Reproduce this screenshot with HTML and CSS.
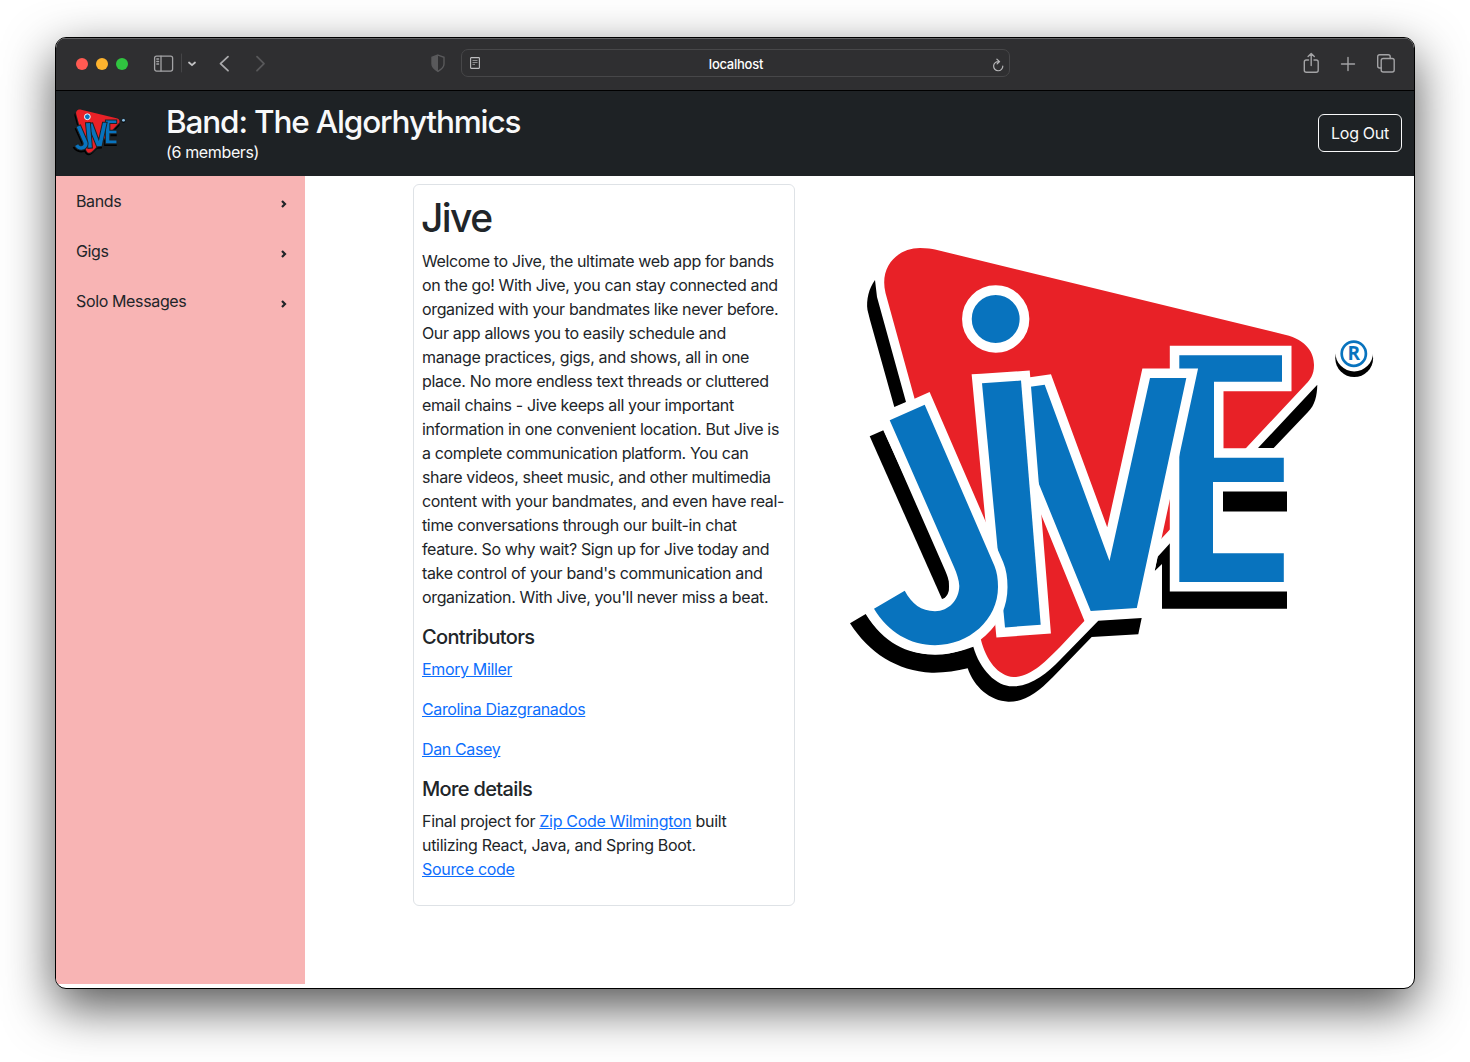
FILE: index.html
```html
<!DOCTYPE html>
<html lang="en">
<head>
<meta charset="utf-8">
<title>Jive</title>
<link rel="stylesheet" href="styles.css">
</head>
<body>
<div class="window">
  <div class="toolbar">
    <div class="lights"><span class="light red"></span><span class="light yellow"></span><span class="light green"></span></div>
    <svg class="nav-icons" width="116" height="24" viewBox="0 0 116 24" fill="none" stroke-linecap="round" stroke-linejoin="round">
      <g stroke="#a3a3a5" stroke-width="1.3"><rect x="1.6" y="5.1" width="18" height="15" rx="2"/><path d="M8 5.1v15M3.8 8h1.8M3.8 10.500h1.8M3.8 13h1.8"/></g>
      <path d="M28.500 3v18" stroke="#454547" stroke-width="1"/>
      <path d="M36 11.500l3 2.700 3-2.700" stroke="#c0c0c2" stroke-width="1.800"/>
      <path d="M75 5.700l-7.500 7 7.500 7" stroke="#a9a9ab" stroke-width="1.800"/>
      <path d="M104 5.700l7 7-7 7" stroke="#58585a" stroke-width="1.800"/>
    </svg>
    <svg class="shield" width="16" height="20" viewBox="0 0 16 20"><path d="M8 2.100l6 2.200v6.700c0 3.200-3 5.600-6 7.400-3-1.800-6-4.200-6-7.400V4.300z" fill="none" stroke="#59595b" stroke-width="1.400"/><path d="M8 2.100v16.300c-3-1.800-6-4.200-6-7.400V4.300z" fill="#59595b"/></svg>
    <div class="address">
      <svg width="10" height="12" viewBox="0 0 10 12"><rect x=".6" y=".6" width="8.800" height="10.800" rx=".6" fill="none" stroke="#bdbdbf" stroke-width="1.100"/><path d="M2.500 3.500h5M2.500 5.500h5M2.500 7.400h2.500" stroke="#8e8e90"/></svg>
      <span>localhost</span>
      <svg class="reload" width="12" height="14" viewBox="0 0 12 14" fill="none" stroke="#b5b5b7" stroke-width="1.200" stroke-linecap="round" stroke-linejoin="round"><path d="M6.800 3.600A4.600 4.600 0 1 0 10.800 8M4.900 1.200l2.700 2.400-2.500 2.300"/></svg>
    </div>
    <svg class="actions" width="94" height="24" viewBox="0 0 94 24" fill="none" stroke="#a3a3a5" stroke-width="1.400" stroke-linecap="round" stroke-linejoin="round">
      <g transform="translate(.5 .5)">
      <path d="M6 8.500H3.800a2 2 0 0 0-2 2v8.200a2 2 0 0 0 2 2h9.900a2 2 0 0 0 2-2v-8.200a2 2 0 0 0-2-2H11.500M8.700 14V2M5.600 4.900L8.700 1.900l3.100 3"/>
      <path d="M39 12.500h13M45.500 6v13"/>
      <rect x="78.700" y="7" width="13" height="13.500" rx="2"/><path d="M78.700 16.500h-1.500a2 2 0 0 1-2-2V5.200a2 2 0 0 1 2-2h8.500a2 2 0 0 1 2 2V7"/>
      </g>
    </svg>
  </div>
  <header class="header">
    <svg class="logo-small" width="54" height="47" viewBox="844 242 534 466"><use href="#jive-logo"/><circle cx="1354" cy="354" r="13" fill="#8fc1e4"/></svg>
    <div class="band"><h2>Band: The Algorhythmics</h2><p>(6 members)</p></div>
    <button class="logout">Log Out</button>
  </header>
  <div class="page">
    <nav class="sidebar">
      <a>Bands<svg width="6" height="8" viewBox="0 0 6 8"><path d="M1 1L4 4 1 7"/></svg></a>
      <a>Gigs<svg width="6" height="8" viewBox="0 0 6 8"><path d="M1 1L4 4 1 7"/></svg></a>
      <a>Solo Messages<svg width="6" height="8" viewBox="0 0 6 8"><path d="M1 1L4 4 1 7"/></svg></a>
    </nav>
    <main class="content">
      <section class="card">
        <h1>Jive</h1>
        <p class="intro">Welcome to Jive, the ultimate web app for bands<br>on the go! With Jive, you can stay connected and<br>organized with your bandmates like never before.<br>Our app allows you to easily schedule and<br>manage practices, gigs, and shows, all in one<br>place. No more endless text threads or cluttered<br>email chains - Jive keeps all your important<br>information in one convenient location. But Jive is<br>a complete communication platform. You can<br>share videos, sheet music, and other multimedia<br>content with your bandmates, and even have real-<br>time conversations through our built-in chat<br>feature. So why wait? Sign up for Jive today and<br>take control of your band's communication and<br>organization. With Jive, you'll never miss a beat.</p>
        <h5>Contributors</h5>
        <p><a href="#">Emory Miller</a></p>
        <p><a href="#">Carolina Diazgranados</a></p>
        <p><a href="#">Dan Casey</a></p>
        <h5>More details</h5>
        <p class="details">Final project for <a href="#">Zip Code Wilmington</a> built<br>utilizing React, Java, and Spring Boot.<br><a href="#">Source code</a></p>
      </section>
      <svg class="logo" width="534" height="466" viewBox="844 242 534 466">
        <g id="jive-logo">
          <g fill="#000">
            <path d="M875 280C869 288 866 300 867.500 310L870 320 894.300 407 906 402 877 297z"/>
            <path d="M869.700 436.300L883.300 430.300 945.500 565.500C949 574 950 588 948 595.500Q946 598 942 599z"/>
            <path d="M850 623.300L865.700 614C884 644 909 655 935 654.300 950 654 962 651 973.300 646.700 980 670 997 687 1013.500 686.300 1032 686 1047 673 1060 660L1098.300 620.700 1141.700 618 1138.300 634.300 1091.700 637 1053 677C1037 693 1025 702 1008.300 701.700 990 701 974 687 967.700 668.300 956 671 944 673 931.700 672.700 897 671 869 653 850 623.300z"/>
            <path d="M1154.700 571L1157.700 556.700 1170 543.300V591H1287V608.700H1162V564z"/>
            <path d="M1223 491h64v20.500h-64z"/>
            <path d="M1317.300 384.700C1317 396 1315 405 1308 412L1273.700 448H1258z"/>
            <circle cx="1354.200" cy="358.200" r="18.900"/>
          </g>
          <circle cx="1354.200" cy="352.500" r="18.900" fill="currentColor"/>
          <path fill="#e82127" d="M935 249.500L1285 334.700C1307 340 1314 353 1314 365 1314 375 1310 380 1306 384L1060 647C1046 661 1031 677 1013.500 677 998 676 986 660 981 640L885.500 293C879 266 898 248 920 248 927 248 932 249 935 249.500z"/>
          <g fill="#0873be" stroke="currentColor" stroke-width="19" stroke-linejoin="miter" paint-order="stroke">
            <path d="M1179.300 355.300H1282V381.700H1214V457.800H1283.800V482H1213V553.300H1283.800V582H1179.300z"/>
            <path d="M1001 391L1044.700 384.700 1109.500 561 1150 378H1186.300L1136.800 608 1090.700 611z" />
            <path d="M982 383.200L1021 380.600 1040.700 624.700 1005 627.400z"/>
            <path d="M889.700 420.300L924.700 404.700 994.500 566C997 572 998 579 998 587 998 620 969 645 935 645.200 910 645 888 632 874 608.700L904.700 590.700C912 604 921 611 935 611.200 949 611 959 600 959.300 586 959 580 957 574 954 567z"/>
          </g>
          <circle cx="995.700" cy="319" r="28.800" fill="#0873be" stroke="#fff" stroke-width="9.700"/>
          <circle cx="1353.800" cy="353.700" r="12.100" fill="none" stroke="#0873be" stroke-width="2.700"/>
          <text class="reg" x="1353.800" y="360" text-anchor="middle">R</text>
        </g>
      </svg>
    </main>
  </div>
</div>
</body>
</html>
```
FILE: styles.css
```css
* { box-sizing: border-box; }
body {
  margin: 0;
  height: 1062px;
  padding: 37px 55px;
  overflow: hidden;
  background: #fff;
  color: #212529;
  font: 16px/24px Inter, "Liberation Sans", sans-serif;
  letter-spacing: -0.36px;
}
h1, h2, h5, p { margin: 0; font-weight: 400; white-space: nowrap; }
svg { display: block; flex: none; }
.window {
  width: 1360px;
  height: 952px;
  border: 1px solid #000;
  border-radius: 11px;
  overflow: hidden;
  background: #fff;
  box-shadow: 0 18px 50px rgba(0, 0, 0, .68);
}
.toolbar {
  display: flex;
  align-items: center;
  height: 53px;
  padding: 0 18px 2px 20px;
  background: #2f2f31;
  border-bottom: 1px solid #000;
  box-shadow: inset 0 1px #626264;
}
.lights { display: flex; gap: 8px; margin-top: 1px; }
.light { width: 12px; height: 12px; border-radius: 50%; }
.red { background: #ff5a52; }
.yellow { background: #fdb32e; }
.green { background: #30c440; }
.nav-icons { margin-left: 25px; }
.shield { margin-left: 161px; }
.address {
  display: flex;
  align-items: center;
  justify-content: space-between;
  width: 549px;
  height: 28px;
  margin-left: 15px;
  padding: 0 5px 0 8px;
  border: 1px solid #474749;
  border-radius: 7px;
  color: #fff;
  font-size: 13px;
  font-weight: 500;
  letter-spacing: -0.25px;
}
.address span { margin-top: 2px; }
.reload { margin-top: 3px; }
.actions { margin-left: auto; }
.header {
  display: flex;
  align-items: center;
  height: 85px;
  padding: 0 12px 0 16px;
  background: #1e2225;
  color: #f8f9fa;
}
.logo-small { color: #1e2225; margin-top: -2px; }
.band { margin-left: 40px; }
.band h2 { height: 37px; font-size: 31.5px; font-weight: 500; line-height: 36px; letter-spacing: -1.15px; }
.band p { margin-top: -1px; }
.logout {
  width: 84px;
  height: 38px;
  margin: -2px 0 0 auto;
  padding: 0;
  background: none;
  border: 1px solid #f8f9fa;
  border-radius: 6px;
  color: #f8f9fa;
  font: inherit;
  letter-spacing: -0.3px;
}
.page { display: flex; }
.sidebar { width: 249px; height: 808px; background: #f8b4b4; }
.sidebar a {
  display: flex;
  align-items: center;
  justify-content: space-between;
  height: 50px;
  padding: 0 18px 0 20px;
}
.sidebar svg { margin-top: 6px; fill: none; stroke: #212529; stroke-width: 2.2; }
.content { display: flex; align-items: flex-start; padding: 8px 0 0 108px; }
.card {
  width: 382px;
  height: 722px;
  padding: 8px;
  border: 1px solid #dee2e6;
  border-radius: 6px;
}
.card h1 { height: 48px; margin-bottom: 8px; padding-top: 1px; font-size: 39px; font-weight: 500; line-height: 48px; letter-spacing: -1.6px; text-indent: -1px; }
.card h5 { margin-bottom: 8px; font-size: 20px; font-weight: 500; line-height: 24px; letter-spacing: -0.65px; }
.card p { margin-bottom: 16px; }
.card .details { letter-spacing: -0.31px; }
.card a { color: #0d6efd; }
.logo { margin: 58px 0 0 49px; color: #fff; overflow: visible; }
.reg { font: 700 19px "Open Sans", sans-serif; letter-spacing: 0; fill: #0873be; }
```
